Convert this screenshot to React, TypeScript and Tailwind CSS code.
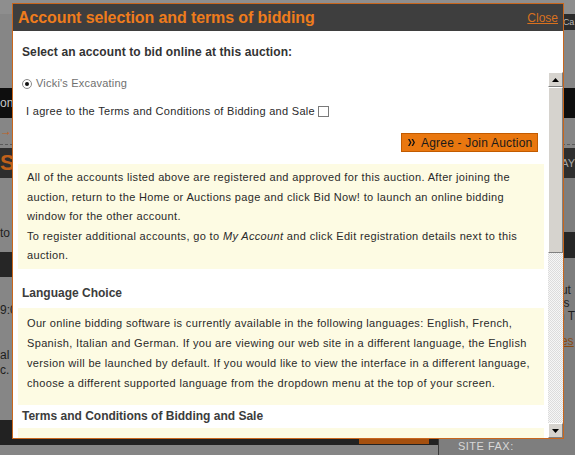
import React from "react";

const font = "font-['Liberation_Sans',Arial,sans-serif]";

const Background = () => {
  return (
    <div className="flex flex-col w-[575px] h-[455px] bg-[#868686] text-[12px]">
      <div className="h-[14px] shrink-0 bg-[#8e8e8e]" />
      <div className="h-[16px] shrink-0 flex justify-end">
        <div className="w-[12px] bg-[#2b2b2b] text-[#b8b8b8] text-[9px] tracking-[-0.3px] leading-[16px] overflow-hidden whitespace-nowrap">Ca</div>
      </div>
      <div className="h-[58px] shrink-0" />
      <div className="h-[30px] shrink-0 bg-[#0e0e0e] text-[#c8c8c8] leading-[30px] whitespace-nowrap">on</div>
      <div className="h-[26px] shrink-0 text-[#c0601a] leading-[26px] font-bold">→</div>
      <div className="h-[1px] shrink-0 border-t border-dashed border-[#5a5a5a]" />
      <div className="h-[3px] shrink-0" />
      <div className="h-[30px] shrink-0 bg-[#2e2e2e] flex justify-between items-center">
        <span className="text-[#c0601a] text-[22px] font-bold leading-none">S</span>
        <span className="text-[#a8a8a8] text-[11px]">AY</span>
      </div>
      <div className="flex flex-1 min-h-0">
        {/* main column */}
        <div className="w-[442px] flex flex-col border-r border-[#3a3a3a]">
          <div className="h-[74px] flex flex-col justify-end pb-[10px] text-[#1e1e1e]">to</div>
          <div className="h-[25px] bg-[#262626]" />
          <div className="h-[143px] flex flex-col pt-[26px] text-[#1e1e1e] leading-[15px]">
            <span>9:0</span>
            <span className="mt-[30px]">al l</span>
            <span>c.</span>
          </div>
          <div className="h-[25px] bg-[#222] flex justify-end items-end pr-[9px] pb-[1px]">
            <div className="w-[70px] h-[6px] bg-[#a5500f]" />
          </div>
          <div className="flex-1" />
        </div>
        {/* sidebar */}
        <div className="flex-1 flex flex-col bg-[#7e7e7e]">
          <div className="h-[54px]" />
          <div className="h-[26px] bg-[#262626]" />
          <div className="pl-[122px] pt-[26px] text-[#1e1e1e] leading-[13px] whitespace-nowrap">
            <div>ut</div>
            <div>is</div>
            <div className="-ml-[3px]">n T</div>
            <div className="mt-[12px] underline text-[#8a4a12]">es</div>
          </div>
          <div className="flex-1" />
          <div className="pl-[19px] pb-[1px] text-[#d8d8d8] text-[11px] tracking-[0.5px]">SITE FAX:</div>
        </div>
      </div>
    </div>
  );
};

const Radio = () => (
  <span className="w-[10px] h-[10px] rounded-full border border-[#8a8a8a] bg-white flex items-center justify-center shrink-0">
    <span className="w-[4px] h-[4px] rounded-full bg-[#111]" />
  </span>
);

const Arrow = ({ up }: { up?: boolean }) => (
  <div className="h-[15px] shrink-0 bg-[#d6d3ce] border border-t-white border-l-white border-r-[#808080] border-b-[#808080] flex items-center justify-center">
    <svg width="7" height="4" viewBox="0 0 7 4">
      {up ? <path d="M3.5 0L7 4H0z" fill="#000" /> : <path d="M0 0h7L3.5 4z" fill="#000" />}
    </svg>
  </div>
);

const Scrollbar = () => (
  <div className="w-[15px] shrink-0 flex flex-col">
    <Arrow up />
    <div className="h-[166px] shrink-0 bg-[#d6d3ce] border border-t-white border-l-white border-r-[#808080] border-b-[#808080]" />
    <div className="flex-1 bg-[repeating-conic-gradient(#dcdcdc_0%_25%,#f6f6f6_0%_50%)] bg-[length:2px_2px]" />
    <Arrow />
  </div>
);

const InfoBox = ({ children, className = "" }: { children: React.ReactNode; className?: string }) => (
  <div className={`ml-[5px] mr-[4px] bg-[#fdfbe3] pl-[9px] pr-[6px] text-[11px] tracking-[0.35px] text-[#2a2a2a] whitespace-nowrap ${className}`}>
    {children}
  </div>
);

export default function App() {
  return (
    <div className={`relative w-[575px] h-[455px] overflow-hidden ${font}`}>
      <Background />

      {/* Modal */}
      <div className="absolute left-[12px] top-[3px] w-[552px] h-[436px] border border-[#c8661d] bg-white flex flex-col">
        <div className="h-[27px] shrink-0 bg-[#3e3e3e] flex items-center justify-between pl-[5px] pr-[5px]">
          <h1 className="text-[16px] font-bold text-[#ef7c1c] tracking-[-0.1px]">
            Account selection and terms of bidding
          </h1>
          <a className="text-[12px] text-[#d9711e] underline cursor-pointer">Close</a>
        </div>

        <div className="h-[41px] shrink-0 flex items-center pl-[9px] text-[12px] font-bold tracking-[0.1px] text-[#333]">
          Select an account to bid online at this auction:
        </div>

        <div className="flex-1 min-h-0 flex">
          <div className="flex-1 overflow-hidden">
            <label className="flex items-center gap-[4px] pl-[9px] pt-[3px] h-[20px] text-[11px] tracking-[0.2px] text-[#707070]">
              <Radio />
              Vicki's Excavating
            </label>

            <div className="flex items-center pl-[13px] mt-[11px] h-[16px] text-[11px] tracking-[0.3px] text-[#2a2a2a]">
              I agree to the Terms and Conditions of Bidding and Sale
              <span className="ml-[3px] w-[11px] h-[11px] border border-[#7a7a7a] bg-white" />
            </div>

            <div className="flex justify-end pr-[10px] mt-[14px]">
              <button className="h-[19px] w-[137px] bg-[#e9770f] border border-[#c25b00] flex items-center gap-[6px] pl-[6px] text-[12px] tracking-[0.2px] text-[#1a1a1a]">
                <svg width="7" height="7" viewBox="0 0 7 7">
                  <path d="M0 0h1.5l2 3.5-2 3.5H0l2-3.5z M3.5 0H5l2 3.5L5 7H3.5l2-3.5z" fill="#111" />
                </svg>
                Agree - Join Auction
              </button>
            </div>

            <InfoBox className="mt-[12px] pt-[4px] pb-[3px] leading-[19.5px]">
              All of the accounts listed above are registered and approved for this auction. After joining the
              <br />
              auction, return to the Home or Auctions page and click Bid Now! to launch an online bidding
              <br />
              window for the other account.
              <br />
              To register additional accounts, go to <i>My Account</i> and click Edit registration details next to this
              <br />
              auction.
            </InfoBox>

            <h2 className="pl-[9px] h-[39px] pt-[9px] flex items-center text-[12px] font-bold text-[#3c3c3c]">Language Choice</h2>

            <InfoBox className="pt-[5px] pb-[11px] leading-[20.3px]">
              Our online bidding software is currently available in the following languages: English, French,
              <br />
              Spanish, Italian and German. If you are viewing our web site in a different language, the English
              <br />
              version will be launched by default. If you would like to view the interface in a different language,
              <br />
              choose a different supported language from the dropdown menu at the top of your screen.
            </InfoBox>

            <h2 className="pl-[9px] h-[23px] flex items-center text-[12px] font-bold text-[#3c3c3c]">
              Terms and Conditions of Bidding and Sale
            </h2>

            <InfoBox className="h-[40px]">{""}</InfoBox>
          </div>
          <Scrollbar />
        </div>
      </div>
    </div>
  );
}
